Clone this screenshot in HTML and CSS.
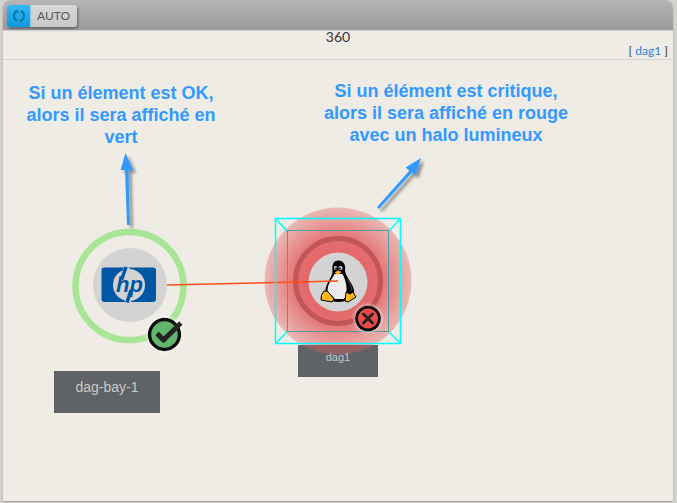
FILE: index.html
```
<!DOCTYPE html>
<html lang="fr">
<head>
  <meta charset="UTF-8">
  <title>360 - dag1</title>
  <link rel="stylesheet" href="styles.css">
</head>
<body>

<main class="panel">
  <header class="toolbar">
    <button class="auto-button" type="button">
      <span class="auto-icon">
        <svg width="14" height="14" viewBox="0 0 14 14" aria-hidden="true">
          <path d="M5 2C1 4 1 10 5 12M9 2C13 4 13 10 9 12" fill="none" stroke="#08799f" stroke-width="2"/>
          <path d="M3 1.500H6.500V4ZM11 12.500H7.500V10Z" fill="#08799f"/>
        </svg>
      </span>
      <span class="auto-label">AUTO</span>
    </button>
  </header>

  <div class="title-bar">
    <h1 class="title">360</h1>
    <div class="crumbs">[ <a href="#dag1">dag1</a> ]</div>
  </div>

  <section class="map">
    <div class="node-label label-bay">dag-bay-1</div>
    <div class="node-label label-dag">dag1</div>

    <svg class="graph" width="670" height="441" viewBox="3 60 670 441" aria-hidden="true">
      <defs>
        <radialGradient id="halo">
          <stop offset="0" stop-color="#e02c30" stop-opacity=".78"/>
          <stop offset=".55" stop-color="#e03c40" stop-opacity=".72"/>
          <stop offset=".8" stop-color="#e04c50" stop-opacity=".52"/>
          <stop offset="1" stop-color="#e06466" stop-opacity=".38"/>
        </radialGradient>
        <filter id="shadow" x="-50%" y="-50%" width="200%" height="200%">
          <feDropShadow dx="3" dy="3" stdDeviation="1.500" flood-color="#000" flood-opacity=".4"/>
        </filter>
        <filter id="glow" x="-30%" y="-30%" width="160%" height="160%">
          <feDropShadow dx="0" dy="0" stdDeviation="2" flood-color="#fff" flood-opacity=".9"/>
        </filter>
      </defs>

      <!-- hp node -->
      <circle cx="129.500" cy="286" r="54" fill="none" stroke="#a9e597" stroke-width="6.500"/>
      <circle cx="130" cy="285" r="37" fill="#d3d3d3"/>
      <rect x="101.500" y="267.500" width="54.500" height="34.500" rx="3" fill="#0057a4"/>
      <circle cx="129" cy="285" r="16" fill="#d3d3d3"/>
      <path d="M127 267L123 280M131.500 290L127.500 302.500" stroke="#d3d3d3" stroke-width="6"/>
      <path d="M126 267L121.500 280M131 290L127 302.500" stroke="#0057a4" stroke-width="3.500"/>
      <text class="brand" x="116" y="292">hp</text>

      <!-- linux node -->
      <circle cx="338" cy="281" r="73.500" fill="url(#halo)"/>
      <circle cx="338" cy="281" r="42.500" fill="none" stroke="#b84f51" stroke-opacity=".8" stroke-width="5"/>
      <circle cx="338" cy="282" r="29.500" fill="#d3d3d3"/>
      <g stroke-linejoin="round">
        <path d="M338.500 260.500C333 260.500 332 265 332.500 271C333 277 325 283 325.500 292L328 299C333 303 344 303 349 299L354 293C355 285 346 278 345 271C346 264 343 260.500 338.500 260.500Z" fill="#000"/>
        <path d="M334.500 274C332 279 327.500 284 327.500 291L335 299H344C348.500 293 346.500 281 342.500 274Z" fill="#ececec"/>
        <path d="M347 279C351 284 352 288 351 291" fill="none" stroke="#555" stroke-width="1"/>
        <ellipse cx="335.500" cy="268" rx="1.500" ry="2" fill="#ddd"/>
        <ellipse cx="340.500" cy="268" rx="2" ry="2" fill="#ddd"/>
        <circle cx="336" cy="268.500" r="1" fill="#000"/>
        <circle cx="340" cy="268.500" r="1" fill="#000"/>
        <path d="M334.500 272.500L338 270.500L341.500 272L338 275Z" fill="#fdb813"/>
        <path d="M324 291H327L330 294L334 299L332 302L321 300L321.500 295Z" fill="#fdb813" stroke="#000" stroke-width="1"/>
        <path d="M346 292L350 294L353 292L356 297L348 302L345 301Z" fill="#fdb813" stroke="#000" stroke-width="1"/>
      </g>

      <!-- link -->
      <path d="M167 285L338 281" stroke="#ff4f16" stroke-width="1.500"/>

      <!-- selection box -->
      <g fill="none" stroke="#00ffff">
        <path d="M276 219L287 231M400 219L389 231M276 343L287 332M400 343L389 332" stroke-width="1.500"/>
        <rect x="275.500" y="218.500" width="125" height="125" stroke-width="1.500"/>
        <rect x="287.500" y="230.500" width="101" height="101" stroke="#4f9c9c" stroke-width="1"/>
      </g>

      <!-- state badges -->
      <g filter="url(#glow)">
        <circle cx="164.500" cy="334.500" r="15" fill="#62b56c" stroke="#111" stroke-width="3.500"/>
        <path d="M157 333.500L163.500 340L181 323" fill="none" stroke="#222" stroke-width="5" stroke-linejoin="round"/>
      </g>
      <g filter="url(#glow)">
        <circle cx="368" cy="318.500" r="11.500" fill="#ee4c48" stroke="#111" stroke-width="3"/>
        <path d="M363.500 314L372.500 323M372.500 314L363.500 323" stroke="#222" stroke-width="3" stroke-linecap="round"/>
      </g>

      <!-- arrows -->
      <g filter="url(#shadow)" fill="#3399ff">
        <path d="M125.500 153L133 170H128.500L130 225H127L125 170H120.500Z"/>
        <path d="M421 158L415.500 175.500L412 172.500L379 209L377 207L409.500 170.500L405.500 167.500Z"/>
      </g>
    </svg>

    <p class="note note-ok">Si un élement est OK,<br>alors il sera affiché en<br>vert</p>
    <p class="note note-critical">Si un élément est critique,<br>alors il sera affiché en rouge<br>avec un halo lumineux</p>
  </section>
</main>

</body>
</html>
```
FILE: styles.css
```
* {
  box-sizing: border-box;
}

body {
  margin: 0;
  height: 100vh;
  padding: 0 4px 2px 3px;
  background: #d4d2ce;
  font-family: Lato, "Liberation Sans", sans-serif;
  color: #333;
}

.panel {
  display: flex;
  flex-direction: column;
  height: 100%;
  border-radius: 8px 8px 0 0;
  background: #efece5;
  box-shadow: 0 1px 2px #999;
}

.toolbar {
  display: flex;
  align-items: flex-start;
  height: 30px;
  padding: 5px 4px;
  border-radius: 8px 8px 0 0;
  background: linear-gradient(#b6b4b5, #9c9a9b);
}

.auto-button {
  display: flex;
  height: 22px;
  padding: 0;
  border: 0;
  border-radius: 3px;
  background: linear-gradient(#d8d8d8, #c8c8c8);
  box-shadow: 1px 2px 3px #666;
  overflow: hidden;
  font-family: inherit;
  font-size: 12px;
  color: #555;
}

.auto-icon {
  display: flex;
  align-items: center;
  justify-content: center;
  width: 24px;
  height: 22px;
  border-right: 1px solid #8fc6e4;
  background: linear-gradient(#35b8fa, #0c9ae0);
}

.auto-label {
  padding: 0 7px 0 6px;
  line-height: 22px;
}

.title-bar {
  height: 30px;
  border-top: 1px solid #d2d0d0;
  border-bottom: 1px solid #d6d4d0;
}

.title {
  margin: 0;
  font-size: 14px;
  font-weight: normal;
  line-height: 12px;
  text-align: center;
}

.crumbs {
  padding-right: 5px;
  font-size: 12px;
  line-height: 16px;
  text-align: right;
}

.crumbs a {
  color: #1f86cf;
  text-decoration: none;
}

.map {
  position: relative;
  flex: 1;
}

.graph {
  position: absolute;
  top: 0;
  left: 0;
}

.brand {
  font: italic bold 22px "Liberation Sans", sans-serif;
  fill: #0057a4;
}

.node-label {
  position: absolute;
  background: #5f6366;
  color: #c9c9c9;
  font-family: "Liberation Sans", Arial, sans-serif;
  text-align: center;
}

.label-bay {
  top: 311px;
  left: 51px;
  width: 106px;
  height: 42px;
  font-size: 14px;
  line-height: 32px;
}

.label-dag {
  top: 285px;
  left: 295px;
  width: 80px;
  height: 32px;
  font-size: 11px;
  line-height: 24px;
}

.note {
  position: absolute;
  margin: 0;
  color: #3399ff;
  font: bold 18px/22px "Liberation Sans", Arial, sans-serif;
  text-align: center;
  white-space: nowrap;
}

.note-ok {
  top: 22px;
  left: 18px;
  width: 200px;
}

.note-critical {
  top: 20px;
  left: 313px;
  width: 260px;
}
```
